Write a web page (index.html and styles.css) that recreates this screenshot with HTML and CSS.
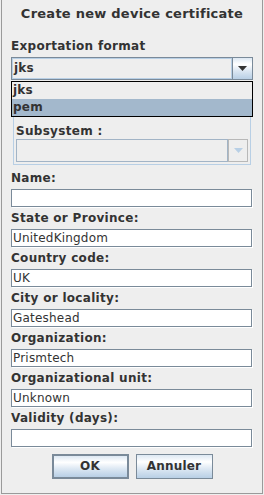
FILE: index.html
```html
<!DOCTYPE html>
<html lang="en">
<head>
    <meta charset="UTF-8">
    <title>Create new device certificate</title>
    <link rel="stylesheet" href="styles.css">
</head>
<body>
<div class="dialog">
    <div class="title">Create new device certificate</div>
    <div class="content">
        <div class="label">Exportation format</div>
        <div class="combo-wrap">
            <div class="combo">
                <div class="combo-text">jks</div>
                <div class="combo-btn">
                    <svg width="9" height="5" viewBox="0 0 9 5"><polygon points="0,0 9,0 4.5,5" fill="#333333"/></svg>
                </div>
            </div>
            <ul class="popup">
                <li>jks</li>
                <li class="current">pem</li>
            </ul>
        </div>

        <div class="group">
            <div class="label small">Subsystem :</div>
            <div class="combo disabled">
                <div class="combo-text"></div>
                <div class="combo-btn">
                    <svg width="9" height="5" viewBox="0 0 9 5"><polygon points="0,0 9,0 4.5,5" fill="#b8cfe5"/></svg>
                </div>
            </div>
        </div>

        <div class="row">
            <div class="label">Name:</div>
            <div class="field"></div>
        </div>
        <div class="row">
            <div class="label">State or Province:</div>
            <div class="field">UnitedKingdom</div>
        </div>
        <div class="row">
            <div class="label">Country code:</div>
            <div class="field">UK</div>
        </div>
        <div class="row">
            <div class="label">City or locality:</div>
            <div class="field">Gateshead</div>
        </div>
        <div class="row">
            <div class="label">Organization:</div>
            <div class="field">Prismtech</div>
        </div>
        <div class="row">
            <div class="label">Organizational unit:</div>
            <div class="field">Unknown</div>
        </div>
        <div class="row">
            <div class="label">Validity (days):</div>
            <div class="field"></div>
        </div>

        <div class="buttons">
            <div class="btn default">OK</div>
            <div class="btn">Annuler</div>
        </div>
    </div>
</div>
</body>
</html>
```
FILE: styles.css
```css
*{
    margin: 0px;
    padding: 0px;
    list-style: none;
    box-sizing: border-box;
}

body{
    background-color: #eeeeee;
    font-family: "DejaVu Sans", sans-serif;
    color: #333333;
}

.dialog{
    margin: 0px 1px 1px 1px;
    height: 494px;
    border: 1px solid #9a9a9a;
    border-top: none;
    background-color: #eeeeee;
}

.title{
    padding-top: 2px;
    height: 26px;
    line-height: 24px;
    font-size: 13px;
    font-weight: bold;
    letter-spacing: 0.25px;
    text-align: center;
}

.content{
    padding: 12px 9px 0px 9px;
}

.label{
    font-size: 12px;
    font-weight: bold;
    letter-spacing: 0.3px;
    line-height: 17px;
    margin-bottom: 2px;
    white-space: nowrap;
}

.label.small{
    line-height: 15px;
    margin-bottom: 0px;
}

/* combo box */
.combo-wrap{
    position: relative;
}

.combo{
    display: flex;
    height: 23px;
    width: 242px;
}

.combo-text{
    flex: 1;
    border: 1px solid #7a8a99;
    box-shadow: inset 1px 1px 0px #b8cfe5, inset -1px -1px 0px #b8cfe5;
    padding-left: 2px;
    font-size: 12px;
    font-weight: bold;
    letter-spacing: 0.2px;
    line-height: 21px;
    background-color: #eeeeee;
}

.combo-btn{
    width: 20px;
    border: 1px solid #7a8a99;
    border-left: none;
    display: flex;
    align-items: center;
    justify-content: center;
    background: linear-gradient(#dde8f3 0%, #ffffff 30%, #dde8f3 60%, #b8cfe5 100%);
}

.combo.disabled{
    width: 232px;
}

.combo.disabled .combo-text{
    border-color: #a2b4c6;
    box-shadow: none;
}

.combo.disabled .combo-btn{
    border: 1px solid #b8b8b8;
    background: #eeeeee;
}

.popup{
    position: absolute;
    top: 24px;
    left: 0px;
    width: 242px;
    border: 1px solid #000000;
    background-color: #eeeeee;
    z-index: 2;
}

.popup li{
    height: 17px;
    line-height: 17px;
    padding-left: 1px;
    font-size: 12px;
    font-weight: bold;
    letter-spacing: 0.2px;
}

.popup .current{
    background-color: #a3b8cc;
}

/* subsystem panel, top part hidden by the popup */
.group{
    margin: 26px 2px 0px 2px;
    border: 1px solid #b8cfe5;
    padding: 17px 2px 2px 2px;
}

.row{
    margin-bottom: 3px;
}

.group + .row{
    margin-top: 5px;
}

.field{
    width: 241px;
    height: 18px;
    border: 1px solid #7a8a99;
    box-shadow: 1px 1px 0px #ffffff;
    background-color: #ffffff;
    font-size: 12px;
    letter-spacing: 0.2px;
    line-height: 16px;
    padding-left: 1px;
    white-space: nowrap;
}

.buttons{
    margin-top: 7px;
    display: flex;
    justify-content: center;
    gap: 7px;
}

.btn{
    width: 77px;
    height: 25px;
    border: 1px solid #7a8a99;
    background: linear-gradient(#dde8f3 0%, #ffffff 30%, #dde8f3 60%, #b8cfe5 100%);
    font-size: 12px;
    font-weight: bold;
    letter-spacing: 0.2px;
    line-height: 23px;
    text-align: center;
}

.btn.default{
    border-width: 2px;
    line-height: 21px;
}
```
